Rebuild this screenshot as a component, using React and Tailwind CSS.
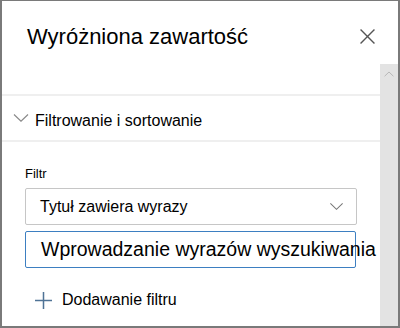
import React from "react";

function Chevron({ className, up }) {
  return (
    <svg viewBox="0 0 16 8" className={className} fill="none" stroke="currentColor" strokeWidth="1.2">
      {up ? <path d="M1 7.5 L8 0.8 L15 7.5" /> : <path d="M1 0.5 L8 7.2 L15 0.5" />}
    </svg>
  );
}

export default function App() {
  return (
    <div
      className="w-[400px] h-[328px] bg-white border-2 border-t border-[#7a7a7a] flex flex-col overflow-hidden"
      style={{ fontFamily: '"Liberation Sans", Arial, sans-serif' }}
    >
      {/* Header */}
      <div className="h-[63px] shrink-0 flex items-start justify-between pl-[25px] pr-[23px]">
        <h1 className="mt-[24px] text-[22px] leading-[24px] text-black">Wyróżniona zawartość</h1>
        <svg viewBox="0 0 14 14" className="mt-[28px] w-[15px] h-[15px] text-[#555]" stroke="currentColor" strokeWidth="1.3">
          <path d="M0.5 0.5 L13.5 13.5 M13.5 0.5 L0.5 13.5" />
        </svg>
      </div>

      {/* Body */}
      <div className="flex flex-1 min-h-0">
        <div className="flex-1 overflow-hidden">
          <div className="h-[30px]" />
          <div className="h-[2px] bg-[#efefef]" />
          <div className="h-[44px] flex items-center">
            <Chevron className="ml-[11px] w-[16px] h-[8px] text-[#8a8a8a]" />
            <span className="ml-[6px] pt-[5px] text-[16px] text-black">Filtrowanie i sortowanie</span>
          </div>
          <div className="h-[2px] bg-[#efefef]" />

          <div className="pl-[23px] pr-[23px] pt-[24px]">
            <div className="text-[13px] leading-[16px] text-black">Filtr</div>
            <div className="mt-[6px] w-[332px] h-[37px] border border-[#c6c6c6] rounded-[2px] flex items-center justify-between pl-[14px] pr-[12px]">
              <span className="text-[16px] text-black">Tytuł zawiera wyrazy</span>
              <Chevron className="w-[15px] h-[7px] text-[#777]" />
            </div>
            <div className="mt-[6px] w-[331px] h-[37px] border border-[#3d7fc1] rounded-[2px] flex items-center pl-[15px]">
              <span className="text-[19.5px] text-black whitespace-nowrap">Wprowadzanie wyrazów wyszukiwania</span>
            </div>
            <div className="mt-[20px] flex items-center">
              <svg viewBox="0 0 18 18" className="ml-[10px] w-[17px] h-[17px] text-[#4f7396]" stroke="currentColor" strokeWidth="1.6">
                <path d="M9 0 V18 M0 9 H18" />
              </svg>
              <span className="ml-[10px] text-[16px] text-black">Dodawanie filtru</span>
            </div>
          </div>
        </div>

        {/* Scrollbar */}
        <div className="w-[18px] shrink-0 bg-[#e3e3e3] flex justify-center">
          <Chevron up className="mt-[7px] w-[10px] h-[6px] text-[#a8a8a8]" />
        </div>
      </div>
    </div>
  );
}
